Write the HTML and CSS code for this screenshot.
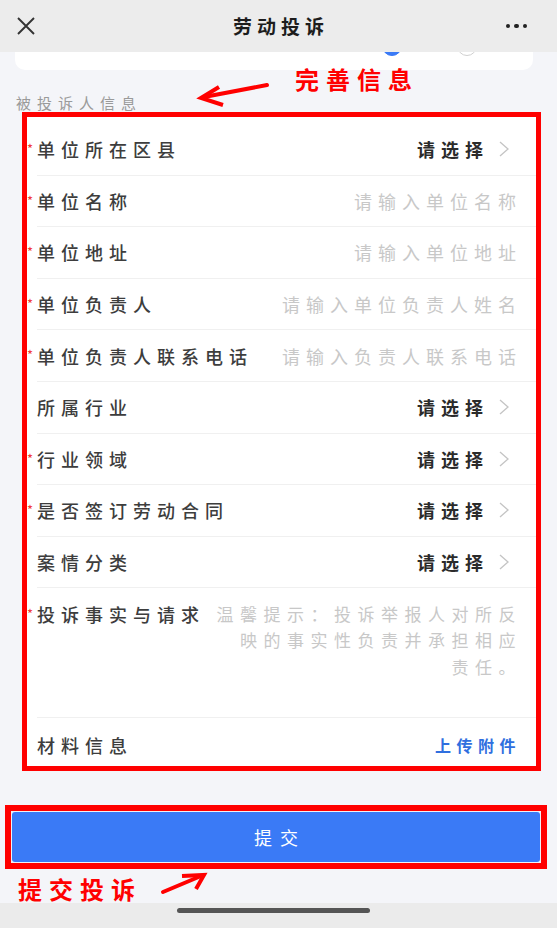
FILE: index.html
```html
<!DOCTYPE html>
<html lang="zh-CN">
<head>
<meta charset="utf-8">
<title>劳动投诉</title>
<link rel="stylesheet" href="styles.css">
</head>
<body>
<div class="page">
  <header class="nav">
    <svg class="nav-close" width="20" height="20" viewBox="0 0 20 20"><path d="M2 2 L18 18 M18 2 L2 18" stroke="#333" stroke-width="1.9" fill="none"/></svg>
    <div class="nav-title">劳动投诉</div>
    <div class="nav-more"><i></i><i></i><i></i></div>
  </header>

  <div class="top-card"><span class="radio on"></span><span class="radio"></span></div>

  <div class="section-title">被投诉人信息</div>

  <div class="form-box">
    <div class="row req"><span class="label">单位所在区县</span><span class="value"><span class="select">请选择</span><svg class="chev" width="12" height="18" viewBox="0 0 12 18"><path d="M2 2 L10 9 L2 16" stroke="#c4c4c4" stroke-width="1.3" fill="none"/></svg></span></div>
    <div class="row req"><span class="label">单位名称</span><span class="ph">请输入单位名称</span></div>
    <div class="row req"><span class="label">单位地址</span><span class="ph">请输入单位地址</span></div>
    <div class="row req"><span class="label">单位负责人</span><span class="ph">请输入单位负责人姓名</span></div>
    <div class="row req"><span class="label">单位负责人联系电话</span><span class="ph">请输入负责人联系电话</span></div>
    <div class="row"><span class="label">所属行业</span><span class="value"><span class="select">请选择</span><svg class="chev" width="12" height="18" viewBox="0 0 12 18"><path d="M2 2 L10 9 L2 16" stroke="#c4c4c4" stroke-width="1.3" fill="none"/></svg></span></div>
    <div class="row req"><span class="label">行业领域</span><span class="value"><span class="select">请选择</span><svg class="chev" width="12" height="18" viewBox="0 0 12 18"><path d="M2 2 L10 9 L2 16" stroke="#c4c4c4" stroke-width="1.3" fill="none"/></svg></span></div>
    <div class="row req"><span class="label">是否签订劳动合同</span><span class="value"><span class="select">请选择</span><svg class="chev" width="12" height="18" viewBox="0 0 12 18"><path d="M2 2 L10 9 L2 16" stroke="#c4c4c4" stroke-width="1.3" fill="none"/></svg></span></div>
    <div class="row"><span class="label">案情分类</span><span class="value"><span class="select">请选择</span><svg class="chev" width="12" height="18" viewBox="0 0 12 18"><path d="M2 2 L10 9 L2 16" stroke="#c4c4c4" stroke-width="1.3" fill="none"/></svg></span></div>
    <div class="row row-area req"><span class="label">投诉事实与请求</span><div class="area-ph">温馨提示：投诉举报人对所反<br>映的事实性负责并承担相应<br>责任。</div></div>
    <div class="row row-last"><span class="label">材料信息</span><span class="upload">上传附件</span></div>
  </div>

  <div class="submit-box"><button class="submit" type="button">提交</button></div>
  <div class="note-bottom">提交投诉</div>
  <div class="home-bar"><span></span></div>

  <div class="note-top">完善信息</div>
  <svg class="arrows" width="557" height="928" viewBox="0 0 557 928">
    <path d="M267 85 L204 97" stroke="#ff0000" stroke-width="4" fill="none" stroke-linecap="round"/>
    <path d="M219 87 L201 98 L223 105" stroke="#ff0000" stroke-width="4" fill="none" stroke-linejoin="miter"/>
    <path d="M163 892 L201 876" stroke="#ff0000" stroke-width="4" fill="none" stroke-linecap="round"/>
    <path d="M182 876 L204 875 L196 889" stroke="#ff0000" stroke-width="4" fill="none" stroke-linejoin="miter"/>
  </svg>
</div>
</body>
</html>
```

FILE: styles.css
```css
* { box-sizing: border-box; }

html, body {
  margin: 0;
  padding: 0;
}

body {
  background: #f4f5f9;
  font-family: "Noto Sans CJK SC", "Noto Sans", sans-serif;
  color: #333;
}

.page {
  position: relative;
  width: 557px;
  height: 928px;
  overflow: hidden;
}

/* navigation bar */
.nav {
  height: 52px;
  background: #ececec;
  display: grid;
  grid-template-columns: 1fr auto 1fr;
  align-items: center;
}

.nav-close {
  margin-left: 16px;
}

.nav-title {
  font-size: 19px;
  font-weight: 700;
  color: #1d1d1d;
  letter-spacing: 5px;
  padding-left: 5px;
  line-height: 24px;
}

.nav-more {
  justify-self: end;
  margin-right: 30px;
  display: flex;
  gap: 4px;
}

.nav-more i {
  display: block;
  width: 4.5px;
  height: 4.5px;
  border-radius: 50%;
  background: #222;
}

/* card scrolled under the bar */
.top-card {
  margin: 0 24px 0 15px;
  height: 18px;
  background: #fff;
  border-radius: 0 0 10px 10px;
  overflow: hidden;
  display: flex;
  gap: 55px;
  padding-left: 367px;
}

.radio {
  display: block;
  width: 20px;
  height: 20px;
  margin-top: -16px;
  border-radius: 50%;
  border: 1px solid #cfcfcf;
  background: #fff;
}

.radio.on {
  background: #3a7af6;
  border-color: #3a7af6;
}

.section-title {
  padding: 23px 0 0 16px;
  font-size: 15px;
  line-height: 19px;
  color: #9a9a9a;
  letter-spacing: 6px;
}

/* form */
.form-box {
  margin-left: 22px;
  width: 519px;
  border: 5px solid #ff0000;
  background: #fff;
  padding-top: 7px;
}

.row {
  position: relative;
  display: flex;
  align-items: center;
  justify-content: space-between;
  height: 51.6px;
  margin-left: 10px;
  padding-right: 14px;
  border-bottom: 1px solid #f0f0f0;
  font-size: 18px;
  letter-spacing: 6px;
}

.row.req::before {
  content: "*";
  position: absolute;
  left: -10px;
  top: 18px;
  font-size: 13px;
  line-height: 13px;
  color: #f0393a;
  letter-spacing: 0;
}

.label {
  color: #3d3d3d;
  font-weight: 500;
  white-space: nowrap;
}

.ph {
  color: #c8c8c8;
  white-space: nowrap;
}

.value {
  display: flex;
  align-items: center;
}

.select {
  color: #2b2b2b;
  font-weight: 700;
  letter-spacing: 6px;
}

.chev {
  display: block;
  margin-left: 9px;
  margin-right: 12px;
}

.row-area {
  align-items: flex-start;
  height: 129.4px;
  padding-top: 12.4px;
  line-height: 26.5px;
}

.row-area.req::before {
  top: 19px;
}

.area-ph {
  color: #c8c8c8;
  text-align: right;
  white-space: nowrap;
  font-size: 17px;
  letter-spacing: 6.5px;
}

.row-last {
  height: 48px;
  padding-top: 6px;
  border-bottom: none;
}

.upload {
  color: #2f6fdf;
  font-size: 16px;
  font-weight: 700;
  letter-spacing: 5.5px;
  margin-right: 1px;
}

/* submit */
.submit-box {
  margin: 34px 10px 0 5px;
  border: 6px solid #ff0000;
  padding: 1px;
  background: #eef1f8;
}

.submit {
  display: block;
  width: 100%;
  height: 50px;
  border: 0;
  border-radius: 3px;
  background: #3a7af6;
  color: #fff;
  font-family: "Noto Sans CJK SC", "Noto Sans", sans-serif;
  font-size: 18px;
  letter-spacing: 8px;
  padding: 0 0 0 8px;
}

.note-bottom {
  height: 34px;
  padding: 6px 0 0 18px;
  line-height: 28px;
  font-size: 24px;
  font-weight: 700;
  color: #ff0000;
  letter-spacing: 7px;
}

.home-bar {
  height: 25px;
  background: #ebebeb;
  padding: 5px 0 0 177px;
}

.home-bar span {
  display: block;
  width: 193px;
  height: 5px;
  border-radius: 3px;
  background: #555;
}

/* annotations */
.note-top {
  position: absolute;
  left: 295px;
  top: 66px;
  font-size: 24px;
  line-height: 26px;
  font-weight: 700;
  color: #ff0000;
  letter-spacing: 7px;
}

.arrows {
  position: absolute;
  left: 0;
  top: 0;
  pointer-events: none;
}
```
